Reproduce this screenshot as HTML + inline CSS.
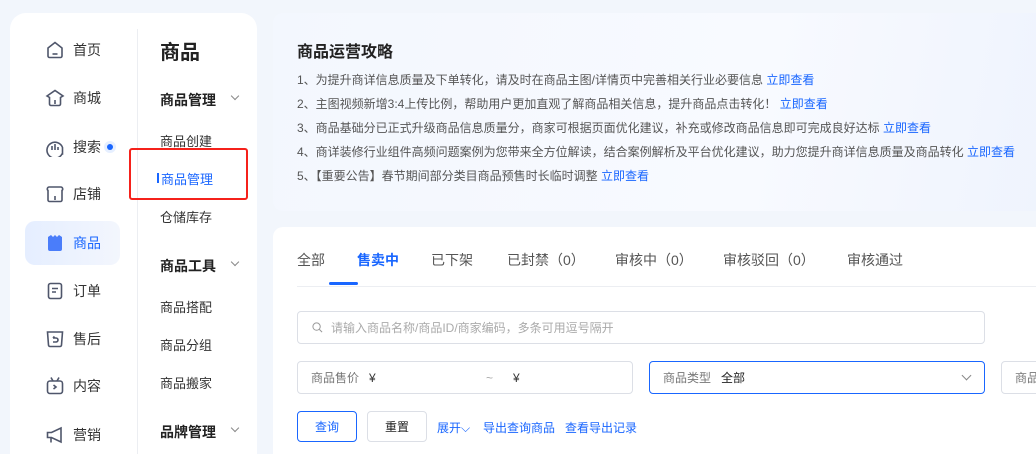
<!DOCTYPE html>
<html style="width:1036px;height:454px;overflow:hidden"><head><meta charset="utf-8"><style>
*{margin:0;padding:0;box-sizing:border-box}
body{width:1036px;height:454px;overflow:hidden;background:#f2f6fc;font-family:"Liberation Sans","Noto Sans CJK SC",sans-serif;position:relative;color:#333}
.abs{position:absolute}
.card{position:absolute;background:#fff;border-radius:16px}
.nav{position:absolute;left:45px;font-size:14px;color:#333;display:flex;align-items:center;height:20px}
.nav svg{width:20px;height:20px;margin-right:8px;fill:none;stroke:#4f566b;stroke-width:1.6}
.sub{position:absolute;left:160px;font-size:13px;color:#333}
.grp{position:absolute;left:160px;font-size:14px;font-weight:bold;color:#222}
.grp:after{content:"";position:absolute;left:72px;top:3px;width:5px;height:5px;border-right:1px solid #888;border-bottom:1px solid #888;transform:rotate(45deg)}
.line{position:absolute;left:297px;font-size:12px;color:#555;white-space:nowrap}
.line a{color:#1966ff;text-decoration:none}
.tab{position:absolute;top:250px;font-size:14px;color:#555}
.box{position:absolute;border:1px solid #dcdfe6;border-radius:4px;height:33px;font-size:12px;color:#777;display:flex;align-items:center}
.btn{position:absolute;top:411px;height:31px;width:60px;border:1px solid #dcdfe6;border-radius:4px;font-size:12px;display:flex;align-items:center;justify-content:center}
.lk{position:absolute;top:419px;font-size:12px;color:#1966ff}
</style></head><body>
<div class="card" style="left:10px;top:13px;width:247px;height:460px"></div>
<div class="abs" style="left:137px;top:29px;width:1px;height:425px;background:#eceef2"></div>
<div class="abs" style="left:25px;top:221px;width:95px;height:44px;border-radius:10px;background:linear-gradient(90deg,#e5eeff,#f3f6fd)"></div>

<div class="nav" style="top:40px"><svg viewBox="0 0 20 20"><path d="M3 8L10 2.5 17 8V16a1.5 1.5 0 0 1-1.5 1.5h-11A1.5 1.5 0 0 1 3 16Z"/><path d="M7.5 14h5"/></svg>首页</div>
<div class="nav" style="top:88px"><svg viewBox="0 0 20 20"><path d="M2 8L10 2.5 18 8 15.5 9.5V16a1.5 1.5 0 0 1-1.5 1.5H6A1.5 1.5 0 0 1 4.5 16V9.5Z"/><path d="M10 12v4"/></svg>商城</div>
<div class="nav" style="top:137px"><svg viewBox="0 0 20 20"><path d="M17 17A8 8 0 1 1 17.5 10.5V17Z"/><path d="M7 9v4M10 7v6M13 10v3"/></svg>搜索<span style="display:inline-block;width:6px;height:6px;border-radius:50%;background:#1966ff;margin-left:6px;box-shadow:0 0 0 3px #e6efff"></span></div>
<div class="nav" style="top:184px"><svg viewBox="0 0 20 20"><path d="M4 3h12a2 2 0 0 1 1 3.5V16a1.5 1.5 0 0 1-1.5 1.5h-11A1.5 1.5 0 0 1 3 16V6.5A2 2 0 0 1 4 3Z"/><path d="M10 12v4"/></svg>店铺</div>
<div class="nav" style="top:233px;color:#1966ff"><svg viewBox="0 0 20 20" style="fill:#4a7dfa;stroke:none"><path d="M3 4l3 -2 2 2 2-2 2 2 2-2 3 2V16a2 2 0 0 1-2 2H5a2 2 0 0 1-2-2Z"/></svg>商品</div>
<div class="nav" style="top:281px"><svg viewBox="0 0 20 20"><rect x="3.5" y="2.5" width="13" height="15" rx="2"/><path d="M7 7.5h6M7 11h4"/></svg>订单</div>
<div class="nav" style="top:329px"><svg viewBox="0 0 20 20"><path d="M2.5 3h15L16.5 16a1.5 1.5 0 0 1-1.5 1.5H5A1.5 1.5 0 0 1 3.5 16Z"/><path d="M8 9h3a2 2 0 0 1 0 4H8M8 9l1.5-1.5"/></svg>售后</div>
<div class="nav" style="top:376px"><svg viewBox="0 0 20 20"><rect x="2.5" y="5" width="15" height="12.5" rx="2.5"/><path d="M6 1.5L8 5M14 1.5L12 5M8.5 9l2.5 2-2.5 2"/></svg>内容</div>
<div class="nav" style="top:425px"><svg viewBox="0 0 20 20"><path d="M2.5 7.5h4L16 3v14L6.5 12.5h-4Z"/><path d="M6 12.5v5"/></svg>营销</div>

<div class="abs" style="left:160px;top:36px;font-size:20px;font-weight:bold;color:#222">商品</div>
<div class="grp" style="top:90px">商品管理</div>
<div class="sub" style="top:131px">商品创建</div>
<div class="abs" style="left:157px;top:173px;width:2px;height:10px;background:#1966ff"></div>
<div class="sub" style="top:169px;left:161px;color:#1966ff">商品管理</div>
<div class="abs" style="left:129px;top:148px;width:119px;height:52px;border:2px solid #f5211b;border-radius:3px"></div>
<div class="sub" style="top:207px">仓储库存</div>
<div class="grp" style="top:256px">商品工具</div>
<div class="sub" style="top:297px">商品搭配</div>
<div class="sub" style="top:335px">商品分组</div>
<div class="sub" style="top:373px">商品搬家</div>
<div class="grp" style="top:422px">品牌管理</div>

<div class="card" style="left:273px;top:13px;width:800px;height:198px;background:linear-gradient(100deg,#f3f7fe,#f8faff 60%,#eef3fd);border-radius:10px"></div>
<div class="abs" style="left:297px;top:38px;font-size:16px;font-weight:bold;color:#222">商品运营攻略</div>
<div class="line" style="top:71px">1、为提升商详信息质量及下单转化，请及时在商品主图/详情页中完善相关行业必要信息 <a>立即查看</a></div>
<div class="line" style="top:95px">2、主图视频新增3:4上传比例，帮助用户更加直观了解商品相关信息，提升商品点击转化！ <a>立即查看</a></div>
<div class="line" style="top:119px">3、商品基础分已正式升级商品信息质量分，商家可根据页面优化建议，补充或修改商品信息即可完成良好达标 <a>立即查看</a></div>
<div class="line" style="top:143px">4、商详装修行业组件高频问题案例为您带来全方位解读，结合案例解析及平台优化建议，助力您提升商详信息质量及商品转化 <a>立即查看</a></div>
<div class="line" style="top:167px">5、【重要公告】春节期间部分类目商品预售时长临时调整 <a>立即查看</a></div>

<div class="card" style="left:273px;top:227px;width:800px;height:227px;border-radius:10px 10px 0 0"></div>
<div class="tab" style="left:297px">全部</div>
<div class="tab" style="left:357px;color:#1966ff;font-weight:bold">售卖中</div>
<div class="abs" style="left:329px;top:282px;width:29px;height:3px;background:#1966ff;border-radius:2px"></div>
<div class="tab" style="left:431px">已下架</div>
<div class="tab" style="left:507px">已封禁（0）</div>
<div class="tab" style="left:615px">审核中（0）</div>
<div class="tab" style="left:723px">审核驳回（0）</div>
<div class="tab" style="left:847px">审核通过</div>
<div class="abs" style="left:297px;top:286px;width:740px;height:1px;background:#eceef2"></div>

<div class="box" style="left:297px;top:311px;width:688px;color:#aaa;padding-left:14px"><svg width="11" height="11" viewBox="0 0 12 12" style="margin-right:8px"><circle cx="5" cy="5" r="4" fill="none" stroke="#999" stroke-width="1.1"/><path d="M8 8l3 3" stroke="#999" stroke-width="1.1"/></svg>请输入商品名称/商品ID/商家编码，多条可用逗号隔开</div>
<div class="box" style="left:297px;top:361px;width:336px;padding-left:13px">商品售价&nbsp;&nbsp;&nbsp;<span style="color:#333">¥</span><span style="position:absolute;left:188px;color:#aaa">~</span><span style="position:absolute;left:215px;color:#333">¥</span></div>
<div class="box" style="left:649px;top:361px;width:336px;padding-left:13px;border-color:#1966ff">商品类型&nbsp;&nbsp;&nbsp;<span style="color:#222">全部</span><span style="position:absolute;right:14px;top:10px;width:7px;height:7px;border-right:1px solid #888;border-bottom:1px solid #888;transform:rotate(45deg)"></span></div>
<div class="box" style="left:1001px;top:361px;width:60px;padding-left:13px">商品</div>

<div class="btn" style="left:297px;border-color:#1966ff;color:#1966ff">查询</div>
<div class="btn" style="left:367px;color:#222">重置</div>
<div class="lk" style="left:437px">展开⌵</div>
<div class="lk" style="left:483px">导出查询商品</div>
<div class="lk" style="left:565px">查看导出记录</div>
</body></html>
